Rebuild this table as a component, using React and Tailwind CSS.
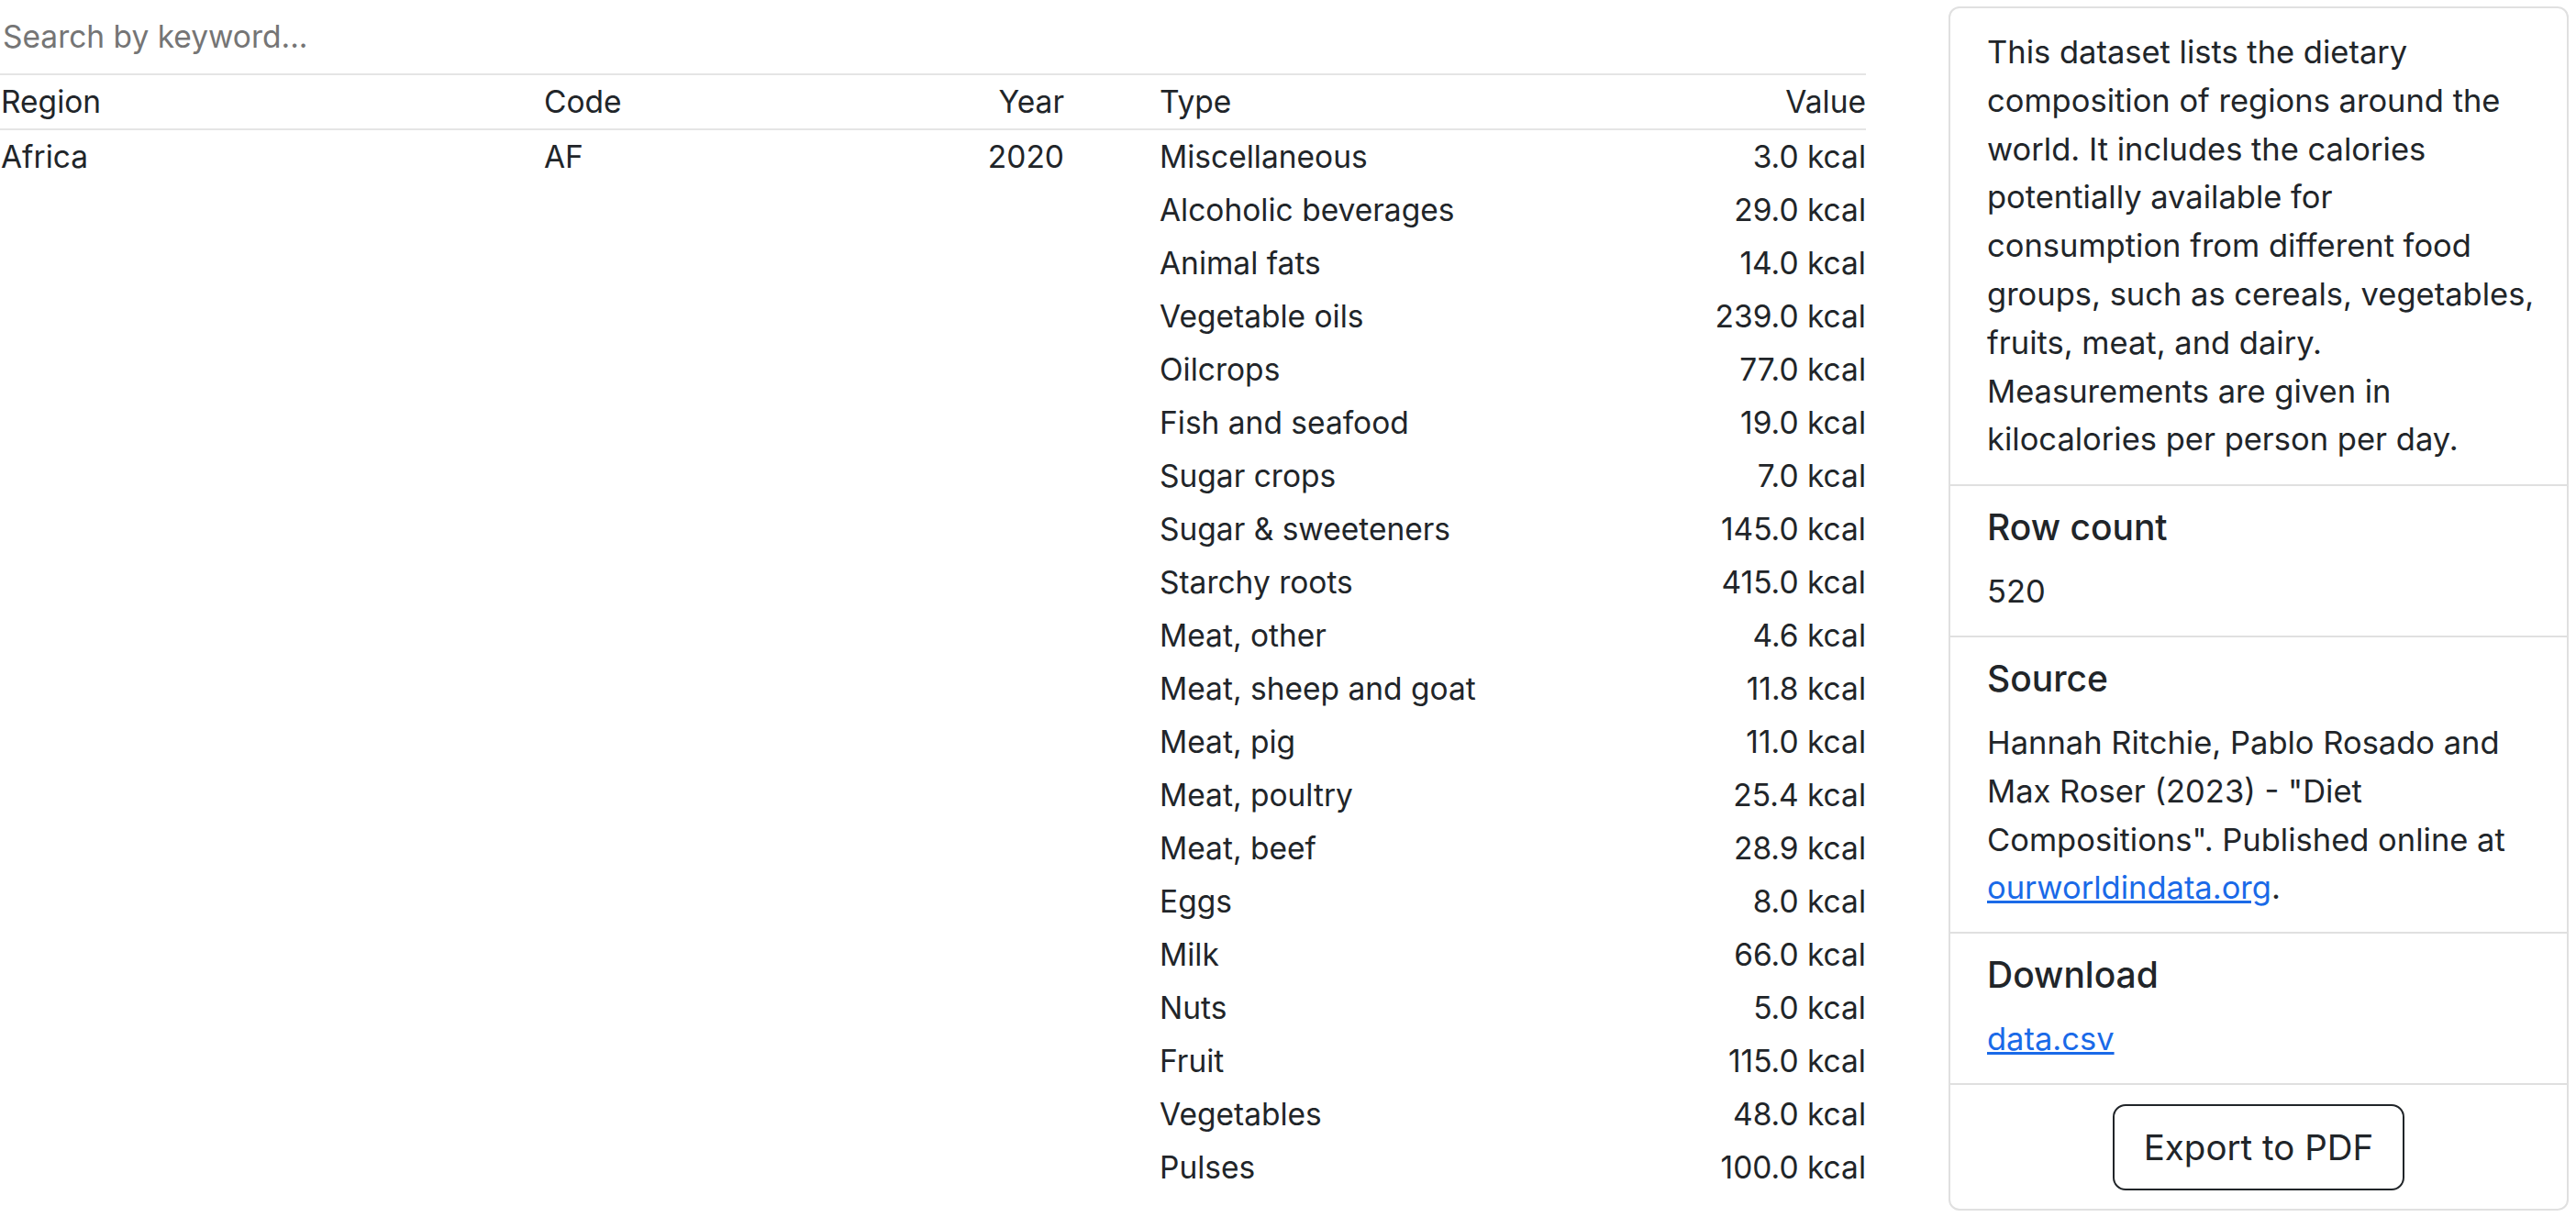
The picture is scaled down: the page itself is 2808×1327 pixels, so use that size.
import React from "react";

const rows = [
  ["Miscellaneous", "3.0 kcal"],
  ["Alcoholic beverages", "29.0 kcal"],
  ["Animal fats", "14.0 kcal"],
  ["Vegetable oils", "239.0 kcal"],
  ["Oilcrops", "77.0 kcal"],
  ["Fish and seafood", "19.0 kcal"],
  ["Sugar crops", "7.0 kcal"],
  ["Sugar & sweeteners", "145.0 kcal"],
  ["Starchy roots", "415.0 kcal"],
  ["Meat, other", "4.6 kcal"],
  ["Meat, sheep and goat", "11.8 kcal"],
  ["Meat, pig", "11.0 kcal"],
  ["Meat, poultry", "25.4 kcal"],
  ["Meat, beef", "28.9 kcal"],
  ["Eggs", "8.0 kcal"],
  ["Milk", "66.0 kcal"],
  ["Nuts", "5.0 kcal"],
  ["Fruit", "115.0 kcal"],
  ["Vegetables", "48.0 kcal"],
  ["Pulses", "100.0 kcal"],
];

function Row({ region, code, year, type, value }) {
  return (
    <div className="flex h-[58px] items-center text-[33.5px] leading-[48px] text-[#212529]">
      <div className="w-[593px] pl-[1px]">{region}</div>
      <div className="w-[300px]">{code}</div>
      <div className="w-[267px] text-right">{year}</div>
      <div className="w-[104px]" />
      <div className="flex-1">{type}</div>
      <div className="text-right">{value}</div>
    </div>
  );
}

export default function App() {
  return (
    <div
      className="flex items-start bg-white min-h-[1327px] w-[2808px]"
      style={{ fontFamily: "Inter, 'Noto Sans', sans-serif" }}
    >
      <div className="w-[2034px] flex flex-col">
        <input
          type="text"
          placeholder="Search by keyword..."
          className="h-[80px] w-full pl-[3px] text-[33.5px] outline-none placeholder:text-[#757575] text-[#212529] bg-white"
        />
        <div className="border-y-2 border-[#e5e5e5]">
          <div className="flex h-[58px] items-center text-[33.5px] leading-[48px] text-[#212529]">
            <div className="w-[593px] pl-[1px]">Region</div>
            <div className="w-[300px]">Code</div>
            <div className="w-[267px] text-right">Year</div>
            <div className="w-[104px]" />
            <div className="flex-1">Type</div>
            <div className="text-right">Value</div>
          </div>
        </div>
        <div className="flex flex-col">
          {rows.map(([t, v], i) => (
            <Row
              key={t}
              region={i === 0 ? "Africa" : ""}
              code={i === 0 ? "AF" : ""}
              year={i === 0 ? "2020" : ""}
              type={t}
              value={v}
            />
          ))}
        </div>
      </div>

      <div className="ml-[90px] mt-[7px] w-[676px] rounded-[12px] border-2 border-[#e0e0e0] text-[#212529]">
        <div className="px-[40px] pt-[22px] pb-[22px] text-[34.5px] leading-[52.8px] whitespace-nowrap">
          This dataset lists the dietary
          <br />
          composition of regions around the
          <br />
          world. It includes the calories
          <br />
          potentially available for
          <br />
          consumption from different food
          <br />
          groups, such as cereals, vegetables,
          <br />
          fruits, meat, and dairy.
          <br />
          Measurements are given in
          <br />
          kilocalories per person per day.
        </div>
        <div className="border-t-2 border-[#e0e0e0] px-[40px] py-[21px] flex flex-col gap-[20px]">
          <div className="text-[39px] leading-[48px] font-medium">Row count</div>
          <div className="text-[34.5px] leading-[52.8px]">520</div>
        </div>
        <div className="border-t-2 border-[#e0e0e0] px-[40px] py-[21px] flex flex-col gap-[20px]">
          <div className="text-[39px] leading-[48px] font-medium">Source</div>
          <div className="text-[34.5px] leading-[52.8px] whitespace-nowrap">
            Hannah Ritchie, Pablo Rosado and
            <br />
            Max Roser (2023) - "Diet
            <br />
            Compositions". Published online at
            <br />
            <a href="#" className="text-[#1a6ae8] underline">ourworldindata.org</a>.
          </div>
        </div>
        <div className="border-t-2 border-[#e0e0e0] px-[40px] py-[21px] flex flex-col gap-[20px]">
          <div className="text-[39px] leading-[48px] font-medium">Download</div>
          <div className="text-[34.5px] leading-[52.8px]">
            <a href="#" className="text-[#1a6ae8] underline">data.csv</a>
          </div>
        </div>
        <div className="border-t-2 border-[#e0e0e0] flex justify-center pt-[21px] pb-[20px]">
          <button className="h-[94px] px-[32px] rounded-[14px] border-2 border-[#212529] text-[38.5px] leading-[60px] text-[#212529] bg-white">
            Export to PDF
          </button>
        </div>
      </div>
    </div>
  );
}
